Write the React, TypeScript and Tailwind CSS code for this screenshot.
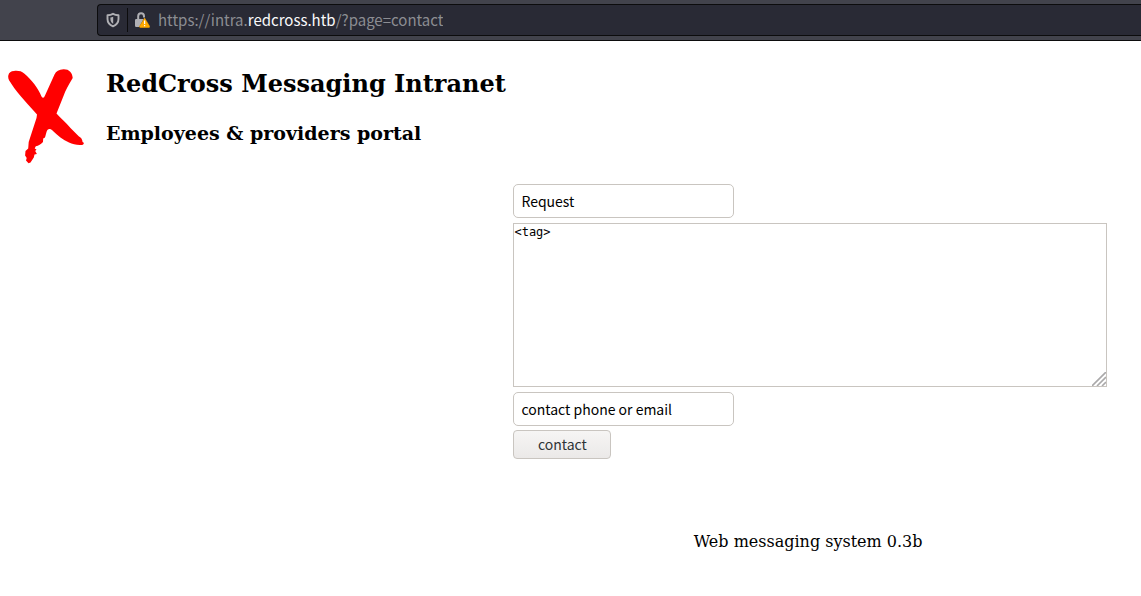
import React from 'react';

function ShieldIcon() {
  return (
    <svg className="size-4" viewBox="0 0 16 16" fill="none" aria-hidden="true">
      <path
        d="M8 1.8C6.4 2.7 4.6 3.1 2.5 3.2V7c0 3.5 2 5.9 5.5 7.3 3.5-1.4 5.5-3.8 5.5-7.3V3.2C11.4 3.1 9.6 2.7 8 1.8Z"
        stroke="#b0b0b4"
        strokeWidth="1.9"
        strokeLinejoin="round"
      />
      <path d="M8.2 4.7C7.3 5.1 6.3 5.4 5.4 5.5V7c0 2.1.9 3.7 2.8 4.8Z" fill="#b0b0b4" />
    </svg>
  );
}

function LockWarningIcon() {
  return (
    <svg className="size-4" viewBox="0 0 16 16" fill="none" aria-hidden="true">
      <path d="M4.2 8V4.2a2.9 2.9 0 0 1 5.8 0V5.6" stroke="#b0b0b4" strokeWidth="2" />
      <path d="M1 8.2A1.2 1.2 0 0 1 2.2 7H9.6L5.2 15H2.2A1.2 1.2 0 0 1 1 13.8Z" fill="#b0b0b4" />
      <path
        d="M10.6 6 15.6 14.2a.8.8 0 0 1-.7 1.3H6.3a.8.8 0 0 1-.7-1.3Z"
        fill="#ffa900"
        stroke="#ffa900"
        strokeWidth=".5"
        strokeLinejoin="round"
      />
      <path d="M10.6 8.6v3.4M10.6 13v1.3" stroke="#fff" strokeWidth="1.2" />
    </svg>
  );
}

function Logo() {
  return (
    <svg className="h-[95px] w-[76px] shrink-0" viewBox="8 69 76 95" role="img" aria-label="RedCross">
      <path
        fill="#f00"
        d="M8.3 75.5C8.8 72.3 11 71 14 70.9C18 70.5 21.5 71 24.2 73.5C32 80 38 88 41.5 96.5Q43.5 99.3 45 95.5L54.5 74.5C56 71 59 69.4 63.5 69.2C69 69 72.5 72.5 72.7 78C68.5 85 65.5 90 63.5 96L56.5 113.5C60 117.5 66 122.5 70.5 128L79 136.5C82.5 138.5 82.3 141 82.6 142L84 143L83 144.8C78 145.5 73 144.5 69 142.5C63 139.8 57.5 135.5 53 131C50 128 47.5 128.5 46.5 132L45 137.5L43.2 138.5L43 142C41 144 38.5 146 35.8 146.2L34.7 148.5L36.5 149.5L35.2 151L36.9 154L34.5 154.5L33.8 157.5L30.5 162.5L28.5 163.3L26 160.5L26.7 158L25.1 155.5L25.5 151L28.2 148.5L28.7 142L36.5 118L37 114.5C30 106 18 94.5 11.5 84C9.5 81 7.7 79 8.3 75.5Z"
      />
    </svg>
  );
}

const fieldClass =
  "h-[34px] w-[221px] rounded-[5px] border border-[#c9c5c0] bg-white px-[7px] font-['Noto_Sans_CJK_SC','Noto_Sans',sans-serif] text-sm text-black outline-none";

export default function App() {
  return (
    <div className="min-h-screen bg-white font-['DejaVu_Serif',serif] text-black">
      <header className="flex h-[41px] border-b border-[#0c0c0d] bg-[#42434c] py-1 pl-[97px]">
        <div className="flex min-w-0 flex-1 items-center rounded-l border border-r-0 border-[#0c0c0d] bg-[#292a35] pl-[7px]">
          <ShieldIcon />
          <span className="mx-[6px] h-6 w-px bg-[#0c0c0d]" />
          <LockWarningIcon />
          <div className="ml-2 truncate pt-px font-['Noto_Sans_CJK_SC','Noto_Sans',sans-serif] text-[15px] text-[#8c8d92]">
            https://intra.<span className="text-[#f9f9fa]">redcross.htb</span>/?page=contact
          </div>
        </div>
      </header>

      <main>
        <div className="flex gap-[22px] pt-7 pl-2">
          <Logo />
          <div className="pt-px">
            <h1 className="text-2xl leading-7 font-bold">RedCross Messaging Intranet</h1>
            <h2 className="mt-[23px] text-[19px] leading-6 font-bold">Employees &amp; providers portal</h2>
          </div>
        </div>

        <div className="mt-5 mr-[3%] ml-[45%]">
          <form className="flex flex-col items-start" onSubmit={(e) => e.preventDefault()}>
            <input className={fieldClass} aria-label="Subject" defaultValue="Request" />
            <div className="relative mt-[5px] w-full">
              <textarea
                className="block h-[164px] w-full resize-none border border-[#c9c5c0] bg-white p-0 font-['DejaVu_Sans_Mono',monospace] text-xs text-black outline-none"
                aria-label="Message"
                defaultValue="<tag>"
              />
              <svg
                className="pointer-events-none absolute right-px bottom-px h-[14px] w-[14px]"
                viewBox="0 0 14 14"
                stroke="#aaa9aa"
                strokeWidth="1.6"
                aria-hidden="true"
              >
                <path d="M0 14 14 0M5 14 14 5M10 14 14 10" />
              </svg>
            </div>
            <input className={`${fieldClass} mt-[5px]`} aria-label="Contact" defaultValue="contact phone or email" />
            <button
              type="submit"
              className="mt-1 h-[29px] w-[98px] rounded-[4px] border border-[#c9c5c0] bg-linear-to-b from-[#f6f5f4] to-[#ebe9e8] pb-[2px] font-['Noto_Sans_CJK_SC','Noto_Sans',sans-serif] text-sm leading-none text-[#2e3436]"
            >
              contact
            </button>
          </form>
          <footer className="mt-[71px] pr-1 text-center text-base">Web messaging system 0.3b</footer>
        </div>
      </main>
    </div>
  );
}
